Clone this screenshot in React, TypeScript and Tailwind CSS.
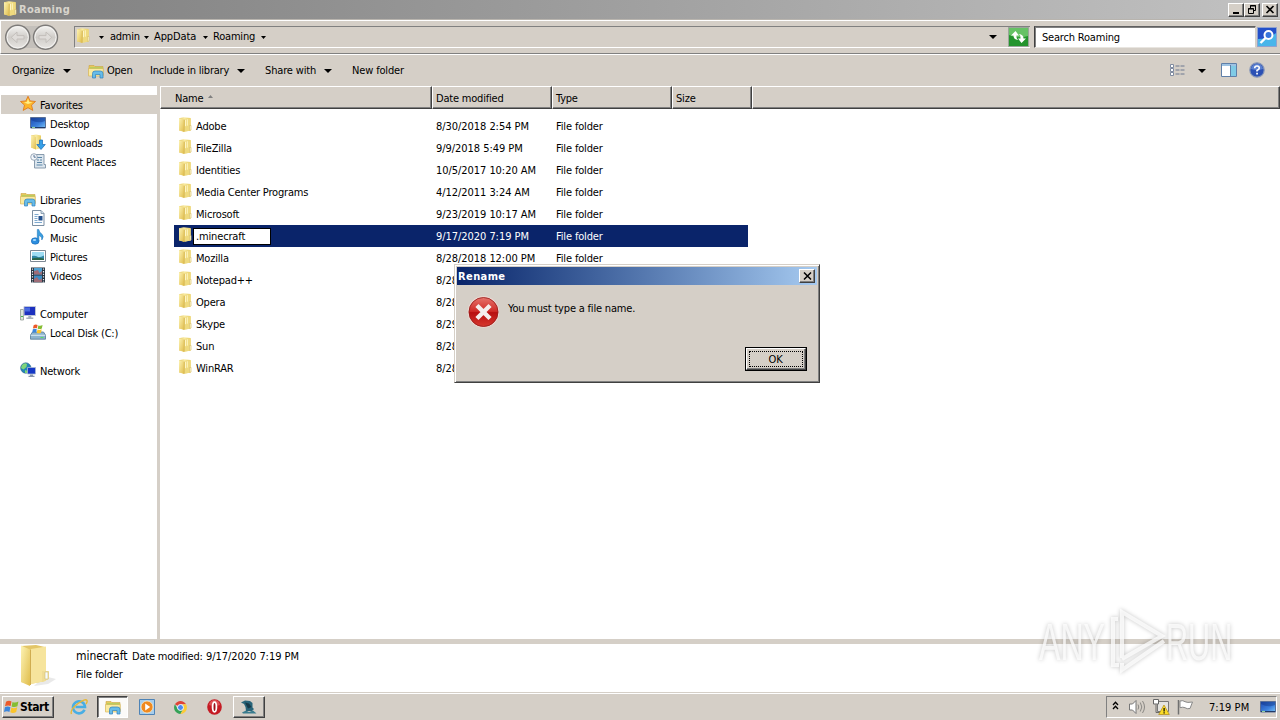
import type { ReactNode } from "react";

const files = [
  { name: "Adobe", date: "8/30/2018 2:54 PM" },
  { name: "FileZilla", date: "9/9/2018 5:49 PM" },
  { name: "Identities", date: "10/5/2017 10:20 AM" },
  { name: "Media Center Programs", date: "4/12/2011 3:24 AM" },
  { name: "Microsoft", date: "9/23/2019 10:17 AM" },
  { name: ".minecraft", date: "9/17/2020 7:19 PM", selected: true },
  { name: "Mozilla", date: "8/28/2018 12:00 PM" },
  { name: "Notepad++", date: "8/28/2018 2:54 PM" },
  { name: "Opera", date: "8/28/2018 2:54 PM" },
  { name: "Skype", date: "8/29/2018 2:54 PM" },
  { name: "Sun", date: "8/28/2018 2:54 PM" },
  { name: "WinRAR", date: "8/28/2018 2:54 PM" },
];

const raised =
  "border border-t-white border-l-white border-r-[#404040] border-b-[#404040] shadow-[inset_-1px_-1px_0_#808080]";

function Gradients() {
  return (
    <svg className="absolute h-0 w-0">
      <defs>
        <linearGradient id="folderFront" x1="0" y1="0" x2="1" y2="1">
          <stop offset="0" stopColor="#fdf3b4" />
          <stop offset="1" stopColor="#e0bd4c" />
        </linearGradient>
        <linearGradient id="folderBack" x1="0" y1="0" x2="1" y2="0">
          <stop offset="0" stopColor="#e6ca68" />
          <stop offset="0.5" stopColor="#f9eba2" />
          <stop offset="1" stopColor="#e8cc60" />
        </linearGradient>
        <linearGradient id="screen" x1="0" y1="0" x2="1" y2="1">
          <stop offset="0" stopColor="#1d48b0" />
          <stop offset="0.6" stopColor="#3c80dc" />
          <stop offset="1" stopColor="#7cc4f4" />
        </linearGradient>
        <linearGradient id="silver" x1="0" y1="0" x2="0" y2="1">
          <stop offset="0" stopColor="#f6f5f3" />
          <stop offset="0.5" stopColor="#cfccc8" />
          <stop offset="1" stopColor="#e9e7e4" />
        </linearGradient>
        <linearGradient id="errorRed" x1="0" y1="0" x2="0" y2="1">
          <stop offset="0" stopColor="#e87870" />
          <stop offset="0.48" stopColor="#cf2a26" />
          <stop offset="0.52" stopColor="#b80f10" />
          <stop offset="1" stopColor="#d83a30" />
        </linearGradient>
      </defs>
    </svg>
  );
}

function Icon({ children }: { children: ReactNode }) {
  return (
    <svg width="16" height="16" viewBox="0 0 16 16" className="shrink-0">
      {children}
    </svg>
  );
}

function FolderIcon() {
  return (
    <Icon>
      <path d="M2 1.2 6.5 0.3 13.5 1V13.5L8 14.6 2 13.5Z" fill="url(#folderBack)" />
      <path d="M7.5 2 13.8 1.3V13.5L7.5 14.8Z" fill="#efda7e" />
      <path d="M2 1.2 7 2.5V15L2 13.3Z" fill="url(#folderFront)" />
      <path d="M7.3 2.8V14.8" stroke="#cfaa40" strokeWidth="0.7" />
      <path d="M8.5 2.7V9.2M10.3 2.2V8.7" stroke="#fff8cc" strokeWidth="0.9" />
      <path d="M12.5 8.5h1.6v4.5l-1.6.4Z" fill="#f9f2c3" stroke="#d3b75c" strokeWidth="0.5" />
    </Icon>
  );
}

function LibraryIcon() {
  return (
    <Icon>
      <path d="M1 2.5h5l1 1h8V12H1Z" fill="#e8c95c" stroke="#c9a445" strokeWidth="0.6" />
      <path d="M2 4.5h12.5V6H2Z" fill="#8ed05c" />
      <path d="M.5 5.5h14.7V13H.5Z" fill="#faeaa0" stroke="#d5b250" strokeWidth="0.6" />
      <path d="M4.5 15V10.5Q4.5 8 7 8h5.5Q15 8 15 10.5V15h-3v-3.5H7.5V15Z" fill="#67bce8" stroke="#2e7fbd" strokeWidth="0.7" />
    </Icon>
  );
}

function StarIcon() {
  return (
    <Icon>
      <path d="M8 .3 10.1 4.9 15.5 5.5 11.5 9.1 12.8 14.4 8 11.7 3.2 14.4 4.5 9.1.5 5.5 5.9 4.9Z" fill="#fcb62c" stroke="#e07b20" strokeWidth="0.9" />
      <path d="M8 2.5 9.2 5.9 12.5 6.5 8 8 4 6.5 6.9 5.9Z" fill="#fff08a" />
    </Icon>
  );
}

function DesktopIcon() {
  return (
    <Icon>
      <path d="M.5 2.5h15v10.5H.5Z" fill="url(#screen)" stroke="#5a6f96" />
      <path d="M1 3h14v3Q8 9 1 5Z" fill="#0c2f7e" opacity=".4" />
      <path d="M1 12.5h14" stroke="#223a66" />
      <path d="M2 12.4h3" stroke="#9fe2a4" />
    </Icon>
  );
}

function DownloadsIcon() {
  return (
    <Icon>
      <path d="M1 1.5 6 .5 11 1.5V14L6 15.5 1 13.5Z" fill="url(#folderBack)" />
      <path d="M1 1.5 6 3V15.5L1 13.5Z" fill="url(#folderFront)" />
      <path d="M9.5 6h3v4.5h2.8L11 15.5 6.8 10.5h2.7Z" fill="#36a0e8" stroke="#1669b5" strokeWidth="0.7" />
    </Icon>
  );
}

function RecentIcon() {
  return (
    <Icon>
      <path d="M5 1.5h9v10h1.5V15H4.5V5Z" fill="#dce6ee" stroke="#7e92a6" strokeWidth="0.9" />
      <path d="M7 4.5h5M7 7h2m1 0h2M7 9.5h5M6.5 12h6" stroke="#5b86a8" />
      <circle cx="4" cy="4" r="3.3" fill="#f3f7fb" stroke="#8797aa" strokeWidth="0.8" />
      <path d="M4 2v2.2h1.8" stroke="#34547c" strokeWidth="0.8" fill="none" />
    </Icon>
  );
}

function DocumentIcon() {
  return (
    <Icon>
      <path d="M2.5.5h8.5l3 3v12H2.5Z" fill="#fbfdff" stroke="#6c8298" strokeWidth="0.9" />
      <path d="M11 .5v3h3" fill="#cfdeea" stroke="#6c8298" strokeWidth="0.7" />
      <path d="M4.5 4.5h4M4.5 6.5h3M4.5 8.5h3M4.5 10.5h3M4.5 12.5h7.5" stroke="#6f9fc9" strokeWidth="0.9" />
      <path d="M8.5 6h4v4.5h-4Z" fill="#24518e" />
    </Icon>
  );
}

function MusicIcon() {
  return (
    <Icon>
      <ellipse cx="5.2" cy="12" rx="3.9" ry="3.2" fill="#2c8fe0" stroke="#1664b2" strokeWidth="0.6" />
      <path d="M7.3 12V.5h1.5Q9.3 3.8 12 5.2 14.5 7.5 11.8 11 12.3 7.8 8.9 6.2V12Z" fill="#3c9fdf" stroke="#1b70b8" strokeWidth="0.5" />
      <ellipse cx="4.5" cy="11" rx="1.7" ry="1" fill="#a8dbff" />
    </Icon>
  );
}

function PicturesIcon() {
  return (
    <Icon>
      <path d="M.5 2.5h15v11H.5Z" fill="#fff" stroke="#7d8894" />
      <path d="M2 4h12v8H2Z" fill="#9edcf3" />
      <path d="M2 8Q6 7 8.5 9.3 11 9 14 7.5V12H2Z" fill="#2f86a5" />
      <path d="M2 10.5Q8 9 14 10.8V12H2Z" fill="#2b6649" />
    </Icon>
  );
}

function VideosIcon() {
  return (
    <Icon>
      <path d="M1 .5h14v15H1Z" fill="#26323f" />
      <path d="M4 1h8v6.5H4Z" fill="#4ea1d3" />
      <path d="M4 8.5h8V15H4Z" fill="#3d8ec5" />
      <path d="M4 4 8 3l1.5 3L12 4v3.5H4ZM4 12l3-2 2 3 3-1.5V15H4Z" fill="#9e6d78" />
      <path d="M2.5 1.5v14M13.5 1.5v14" stroke="#e6edf3" strokeWidth="1.2" strokeDasharray="1.3 1.3" />
    </Icon>
  );
}

function ComputerIcon() {
  return (
    <Icon>
      <path d="M.5 4.5h3V15h-3Z" fill="#dce6dc" stroke="#838d87" strokeWidth="0.7" />
      <path d="M1 11.5h2" stroke="#47b84b" />
      <path d="M4 1.5h11.5v9H4Z" fill="#1c30bf" stroke="#bec5d6" />
      <path d="M5 2.5h5v4H5Z" fill="#5c83f0" opacity=".7" />
      <path d="M8.3 11h3v1.5h2V14h-7v-1.5h2Z" fill="#a7b0bd" />
    </Icon>
  );
}

function WindowsFlag() {
  return (
    <g>
      <path d="M2 2.8Q4.7.8 7.5 2.4L6.6 7Q4 5.8 1 7.3Z" fill="#ec5a2a" />
      <path d="M8.5 2.9Q11.3 4.2 14.4 2.4L13.4 7.2Q10.6 8.7 7.6 7.4Z" fill="#85bd34" />
      <path d="M.9 8.3Q3.5 6.8 6.4 8.2L5.4 12.9Q3 11.6 0 13Z" fill="#3b86dc" />
      <path d="M7.4 8.6Q10 9.9 13.2 8.3L12.2 13Q9 14.7 6.3 13.2Z" fill="#fac42c" />
    </g>
  );
}

function DiskIcon() {
  return (
    <Icon>
      <path d="M2.5 8h11L15.5 11v4.2H.5V11Z" fill="#8eb4cd" stroke="#527a95" strokeWidth="0.8" />
      <path d="M.7 11.3h14.6" stroke="#d9ecf5" />
      <path d="M10.5 13.5h3" stroke="#58df63" />
      <g transform="translate(2.2 -.7) scale(.72)">
        <WindowsFlag />
      </g>
    </Icon>
  );
}

function NetworkIcon() {
  return (
    <Icon>
      <circle cx="5.8" cy="6" r="5.2" fill="#2385b5" stroke="#33608b" strokeWidth="0.6" />
      <path d="M2 3Q5 0 7 2L6.5 5 3.5 7.5 1 6ZM5 8l3 1-1 2H5Z" fill="#7fd578" />
      <path d="M7.5 5.5h8v6.5h-8Z" fill="#1537c6" stroke="#a9b8d2" strokeWidth="0.8" />
      <path d="M10 12.5h3v1.2h1.5V15h-6v-1.3H10Z" fill="#8694ac" />
    </Icon>
  );
}

const tree = [
  { label: "Favorites", icon: <StarIcon />, root: true, active: true },
  { label: "Desktop", icon: <DesktopIcon /> },
  { label: "Downloads", icon: <DownloadsIcon /> },
  { label: "Recent Places", icon: <RecentIcon /> },
  null,
  { label: "Libraries", icon: <LibraryIcon />, root: true },
  { label: "Documents", icon: <DocumentIcon /> },
  { label: "Music", icon: <MusicIcon /> },
  { label: "Pictures", icon: <PicturesIcon /> },
  { label: "Videos", icon: <VideosIcon /> },
  null,
  { label: "Computer", icon: <ComputerIcon />, root: true },
  { label: "Local Disk (C:)", icon: <DiskIcon /> },
  null,
  { label: "Network", icon: <NetworkIcon />, root: true },
];

function Caret({ small }: { small?: boolean }) {
  return small ? (
    <svg width="5" height="3" viewBox="0 0 5 3" className="shrink-0">
      <path d="M0 0h5L2.5 3Z" />
    </svg>
  ) : (
    <svg width="8" height="4" viewBox="0 0 8 4" className="shrink-0">
      <path d="M0 0h8L4 4Z" />
    </svg>
  );
}

function TitleBar() {
  const button = `flex h-[14px] items-center justify-center bg-[#d5cfc7] ${raised}`;
  return (
    <div className="flex h-[19px] items-center bg-linear-to-r from-[#808080] to-[#c2c2c2] pl-[2px] pr-[2px]">
      <div className="pb-px">
        <FolderIcon />
      </div>
      <span className="ml-px flex-1 font-bold tracking-[0.3px] text-[#d8d4cc]">Roaming</span>
      <div className="flex">
        <div className={`${button} w-[16px]`}>
          <svg width="12" height="11" viewBox="0 0 12 11">
            <path d="M3 8h6v2H3Z" />
          </svg>
        </div>
        <div className={`${button} w-[16px]`}>
          <svg width="12" height="11" viewBox="0 0 12 11" fill="none" stroke="#000">
            <path d="M4.5 4V1.5h5v5H8M4 2h6" />
            <path d="M2.5 4.5h5v5h-5ZM2 5h6" />
          </svg>
        </div>
        <div className={`${button} ml-[2px] w-[16px]`}>
          <svg width="12" height="11" viewBox="0 0 12 11" stroke="#000" strokeWidth="1.6">
            <path d="m2.5 2 7 7m0-7-7 7" />
          </svg>
        </div>
      </div>
    </div>
  );
}

function NavButtons() {
  return (
    <svg width="56" height="28" viewBox="0 0 56 28" className="shrink-0">
      <path d="M14 3h28v22H14Z" fill="#c4c0bb" />
      {[14.7, 42.5].map((x) => (
        <g key={x}>
          <circle cx={x} cy="14.3" r="12" fill="url(#silver)" stroke="#7d7b79" strokeWidth="1.4" />
          <circle cx={x} cy="14.3" r="10.6" fill="none" stroke="#f5f4f2" strokeWidth="1" />
        </g>
      ))}
      <path d="M21 12.6h-7V9L8.3 14.3 14 19.6V16h7Z" fill="#dfdcd9" stroke="#c3bfbb" />
      <path d="M36 12.6h7V9l5.7 5.3L43 19.6V16h-7Z" fill="#dfdcd9" stroke="#c3bfbb" />
    </svg>
  );
}

function AddressBar() {
  return (
    <div className="flex h-[34px] items-center border-t border-b border-l border-t-white border-b-[#808080] border-l-white pl-[2px] shadow-[inset_0_-1px_0_#d5cfc7]">
      <NavButtons />
      <div className="ml-[15px] flex h-[22px] w-[956px] items-center border-t border-l border-b border-t-[#808080] border-l-[#808080] border-b-white">
        <div className="pb-[2px]">
          <FolderIcon />
        </div>
        <div className="ml-[8px] flex items-center">
          <Caret small />
          <span className="ml-[6px] w-[34px] tracking-[-0.25px]">admin</span>
          <Caret small />
          <span className="ml-[5px] w-[49px] tracking-[-0.1px]">AppData</span>
          <Caret small />
          <span className="ml-[5px] w-[48px] tracking-[-0.2px]">Roaming</span>
          <Caret small />
        </div>
        <div className="ml-auto mr-[11px]">
          <Caret />
        </div>
        <svg width="21" height="20" viewBox="0 0 21 20" className="mr-px">
          <path d="M.5.5h20v19H.5Z" fill="#24942d" stroke="#9aa59a" />
          <path d="M1 1h19v8Q10 12 1 8Z" fill="#66c265" />
          <path d="M7.5 4 3 8.5h2.5q0 4 4.5 4.5-2-1.8-1.5-4.5H11Z" fill="#fff" />
          <path d="m13.5 16 4.5-4.5h-2.5q0-4-4.5-4.5 2 1.8 1.5 4.5H10Z" fill="#fff" />
        </svg>
      </div>
      <div className="ml-[4px] flex h-[22px] w-[222px] items-center border border-t-[#606060] border-l-[#404040] border-r-[#d5cfc7] border-b-[#e8e5e0] bg-white pl-[7px] shadow-[inset_1px_1px_0_#808080]">
        <span className="pt-[2px] tracking-[-0.19px]">Search Roaming</span>
      </div>
      <svg width="20" height="20" viewBox="0 0 20 20" className="ml-px">
        <path d="M.5.5h19v19H.5Z" fill="#2350c9" stroke="#8fa2cf" />
        <path d="M1 12Q12 12 19 6v13H1Z" fill="#48b5ea" />
        <circle cx="11.5" cy="8" r="4" fill="#3675dc" stroke="#fff" strokeWidth="2" />
        <path d="m8.5 11-5 5" stroke="#fff" strokeWidth="2.4" />
      </svg>
    </div>
  );
}

function Toolbar() {
  return (
    <div className="flex h-[32px] items-center border-t border-white pl-[12px]">
      <span className="w-[51px] pt-px">Organize</span>
      <Caret />
      <div className="ml-[17px]">
        <LibraryIcon />
      </div>
      <span className="ml-[3px] w-[43px] pt-px">Open</span>
      <span className="w-[87px] pt-px tracking-[-0.23px]">Include in library</span>
      <Caret />
      <span className="ml-[20px] w-[59px] pt-px tracking-[-0.15px]">Share with</span>
      <Caret />
      <span className="ml-[20px] pt-px tracking-[-0.15px]">New folder</span>
      <svg width="15" height="12" viewBox="0 0 15 12" className="mb-px ml-auto">
        <path d="M.5.5h3v3h-3Zm0 4h3v3h-3Zm0 4h3v3h-3Z" fill="#fff" stroke="#7f8ba0" />
        <path d="M5.5 2h4m1 0h4m-9 4h4m1 0h4m-9 4h4m1 0h4" stroke="#6c7890" />
      </svg>
      <div className="ml-[13px]">
        <Caret />
      </div>
      <svg width="16" height="14" viewBox="0 0 16 14" className="mb-px ml-[15px]">
        <path d="M.5.5h15v13H.5Z" fill="#fff" stroke="#5f7fa8" />
        <path d="M1 1h14v2H1Z" fill="#9ec3e3" />
        <path d="M10 3h5v10h-5Z" fill="#7fcbe6" />
        <path d="M9.5 2v11" stroke="#5f7fa8" />
      </svg>
      <svg width="16" height="16" viewBox="0 0 16 16" className="mr-[15px] mb-px ml-[12px]">
        <circle cx="8" cy="8" r="7.2" fill="#2b50b4" stroke="#8797b9" strokeWidth="1.2" />
        <path d="M2 7Q3 2 8 2t6 5Q8 9 2 7Z" fill="#7094dd" opacity=".7" />
        <path d="M5.7 6.2Q5.7 4 8 4t2.3 2.1Q10.3 7.5 8 8.4v1.1" fill="none" stroke="#fff" strokeWidth="1.6" />
        <path d="M7.2 10.8h1.7v1.6H7.2Z" fill="#fff" />
      </svg>
    </div>
  );
}

function Sidebar() {
  return (
    <aside className="w-[157px] bg-white pt-[9px]">
      {tree.map((item, i) =>
        item ? (
          <div
            key={i}
            className={`ml-px flex h-[19px] items-center ${item.root ? "pl-[19px]" : "pl-[29px]"} ${item.active ? "-mr-[3px] bg-[#d5cfc7]" : ""}`}
          >
            <div className="pb-px">{item.icon}</div>
            <span className="ml-[4px] pt-[3px] tracking-[-0.2px] whitespace-nowrap">{item.label}</span>
          </div>
        ) : (
          <div key={i} className="h-[19px]" />
        ),
      )}
    </aside>
  );
}

function ColumnHeaders() {
  const cell =
    "flex items-center border-t border-l border-r border-b border-t-white border-l-white border-r-[#404040] border-b-[#404040] pt-[2px] shadow-[inset_-1px_-1px_0_#808080]";
  return (
    <div className="flex h-[23px] bg-[#d5cfc7] tracking-[-0.2px]">
      <div className={`${cell} w-[272px] pl-[14px]`}>
        Name
        <svg width="5" height="3" viewBox="0 0 5 3" className="mb-[4px] ml-[5px]">
          <path d="M0 3h5L2.5 0Z" fill="#808080" />
        </svg>
      </div>
      <div className={`${cell} w-[120px] pl-[3px]`}>Date modified</div>
      <div className={`${cell} w-[120px] pl-[3px]`}>Type</div>
      <div className={`${cell} w-[80px] pl-[3px]`}>Size</div>
      <div className={`${cell} flex-1`} />
    </div>
  );
}

function FileList() {
  return (
    <main className="flex-1 bg-white">
      <ColumnHeaders />
      <div className="ml-[14px] mt-[6px] w-[574px]">
        {files.map((file) => (
          <div
            key={file.name}
            className={`flex h-[22px] items-center pl-[3px] ${file.selected ? "bg-[#0a246a] text-white" : ""}`}
          >
            <div className="pb-[2px]">
              <FolderIcon />
            </div>
            {file.selected ? (
              <div className="mr-[165px] flex h-[17px] w-[78px] items-center border border-black bg-white pt-px pl-[2px] tracking-[-0.15px] text-black">
                {file.name}
              </div>
            ) : (
              <span className="w-[243px] pt-[2px] pl-[3px] tracking-[-0.19px]">{file.name}</span>
            )}
            <span className="w-[120px] pt-[2px] tracking-[-0.05px] whitespace-nowrap">{file.date}</span>
            <span className="pt-[2px] tracking-[-0.15px]">File folder</span>
          </div>
        ))}
      </div>
    </main>
  );
}

function DetailsPane() {
  return (
    <div className="flex h-[48px] bg-white pl-[18px]">
      <svg width="44" height="46" viewBox="0 0 44 46">
        <path d="M26 32 38 35 30 40 16 42Z" fill="#d4d4d4" opacity=".5" />
        <path d="M3 2 18 1 27 3V37L12 40 3 38Z" fill="#e3c668" />
        <path d="M13 5 28 2.5V37L13 40Z" fill="#f6e49c" />
        <path d="M3 1.5 12 5.500V42L3 38Z" fill="url(#folderFront)" />
        <path d="M12.500 6v35" stroke="#d0ad50" />
        <path d="M24 27h7v8l-7 3Z" fill="#efdc94" />
        <path d="M27 28h3v7h-3Z" fill="#f7fbfb" stroke="#cdbd77" strokeWidth=".6" />
      </svg>
      <div className="ml-[14px] pt-[3px] leading-[18px]">
        <div className="flex">
          <span className="w-[56px] text-[12px] tracking-[-0.05px]">minecraft</span>
          <span className="w-[74px] pt-px tracking-[-0.2px]">Date modified:</span>
          <span className="pt-px tracking-[-0.05px]">9/17/2020 7:19 PM</span>
        </div>
        <div className="tracking-[-0.15px]">File folder</div>
      </div>
    </div>
  );
}

function Taskbar() {
  return (
    <div className="mt-px flex h-[27px] items-center border-t border-white bg-[#d5cfc7] pl-[2px]">
      <div className={`flex h-[22px] w-[52px] items-center bg-[#d5cfc7] pl-px ${raised}`}>
        <Icon>
          <WindowsFlag />
        </Icon>
        <span className="text-[12px] font-bold tracking-[-0.4px]">Start</span>
      </div>
      <svg width="18" height="18" viewBox="0 0 18 18" className="ml-[16px]">
        <path d="M14.5 11.8A6 6 0 1 1 15 9H5.5" fill="none" stroke="#48aee4" strokeWidth="2.6" />
        <path d="M1.5 16Q-.5 12 8 5.5 15.5.2 17 2.5q.6 1-1 3.5" fill="none" stroke="#e7b836" strokeWidth="1.4" />
      </svg>
      <div className="ml-[9px] flex h-[22px] w-[31px] items-center justify-center border border-t-[#404040] border-l-[#404040] border-r-white border-b-white bg-[#fbfaf8] shadow-[inset_1px_1px_0_#808080]">
        <LibraryIcon />
      </div>
      <svg width="16" height="16" viewBox="0 0 16 16" className="ml-[11px]">
        <path d="M.5.5h15v15H.5Z" fill="#a6cdec" stroke="#4e83b6" />
        <circle cx="8" cy="8" r="6" fill="#ef891f" stroke="#fff0cf" strokeWidth=".7" />
        <path d="m6.2 4.6 5 3.4-5 3.4Z" fill="#fff" />
      </svg>
      <svg width="13" height="13" viewBox="0 0 14 14" className="ml-[19px]">
        <path d="M7 7 1 3.5A7 7 0 0 1 13 3.5H7Z" fill="#df4437" />
        <path d="M1 3.5A7 7 0 0 0 7 14L10 8.7 4 8.7Z" fill="#35a257" />
        <path d="M13 3.5A7 7 0 0 1 7 14L10 8.5 9.5 3.5Z" fill="#fbcb38" />
        <circle cx="7" cy="7" r="3.2" fill="#4a8af0" stroke="#fff" />
      </svg>
      <svg width="15" height="16" viewBox="0 0 15 16" className="ml-[20px]">
        <ellipse cx="7.5" cy="8" rx="7.3" ry="7.7" fill="#c51b24" />
        <path d="M2 6Q3 1 7.5 1T13 6Q8 8 2 6Z" fill="#ed7778" opacity=".6" />
        <ellipse cx="7.5" cy="8" rx="1.9" ry="4.8" fill="#9d111b" stroke="#fff" strokeWidth="1.8" />
      </svg>
      <div className={`ml-[11px] flex h-[22px] w-[32px] items-center justify-center ${raised}`}>
        <svg width="16" height="16" viewBox="0 0 16 16">
          <path d="M0 3.5 4 1.5 9 2 11.5 4V8.5L13 10 11 12H5L4.5 8 3 5Z" fill="#286479" />
          <path d="M4 3.5 8 4.5 10.5 8 7 9.5Z" fill="#173948" />
          <path d="M1 13.5 5 11.5 8 13 12 11.5 15.5 14.5H2Z" fill="#3a7c8e" />
        </svg>
      </div>
      <div className="ml-auto mr-[3px] flex h-[22px] w-[171px] items-center border border-t-[#808080] border-l-[#808080] border-r-white border-b-white pl-[5px]">
        <svg width="7" height="9" viewBox="0 0 7 9" fill="none" stroke="#000" strokeWidth="1.3" className="mb-[4px]">
          <path d="M1 4 3.5 1.3 6 4M1 8l2.5-2.7L6 8" />
        </svg>
        <svg width="17" height="16" viewBox="0 0 17 16" className="ml-[10px]" fill="none">
          <path d="M.5 5h3L7 1.5v13L3.5 11h-3Z" fill="#fff" stroke="#777" />
          <path d="M9 5.5q1.5 2.5 0 5M11.3 3.5q3 4.5 0 9M13.5 2q4 6 0 12" stroke="#898783" />
        </svg>
        <svg width="17" height="16" viewBox="0 0 17 16" className="ml-[7px]">
          <path d="M4.5 2.5h11v10h-11Z" fill="#e5e4e0" stroke="#777" />
          <path d="M3 5.5v8h4" fill="none" stroke="#6c6a68" />
          <path d="M.5.5h5v4.5h-5Z" fill="#fff" stroke="#666" />
          <path d="m11 6 5.3 9.5H5.7Z" fill="#fbdc28" stroke="#af8917" strokeWidth=".7" />
          <path d="M10.5 9h1.2v3.5h-1.2Zm0 4.2h1.2v1.2h-1.2Z" />
        </svg>
        <svg width="17" height="16" viewBox="0 0 17 16" className="ml-[7px]">
          <path d="M1.5 1v14.5" stroke="#707070" strokeWidth="1.5" />
          <path d="M3 2q3-1 5 .7 2 1.3 7.5.3L13 9.5q-3 .8-5-.8-2-1-5 0Z" fill="#fff" stroke="#888" />
        </svg>
        <span className="ml-[15px] w-[41px] pt-px tracking-[0.05px] whitespace-nowrap">7:19 PM</span>
        <div className="ml-[10px]">
          <DesktopIcon />
        </div>
      </div>
    </div>
  );
}

function RenameDialog() {
  return (
    <div className="absolute top-[264px] left-[454px] h-[119px] w-[366px] border border-t-[#d5cfc7] border-l-[#d5cfc7] border-r-[#404040] border-b-[#404040] bg-[#d5cfc7] p-[2px] shadow-[inset_1px_1px_0_#fff,inset_-1px_-1px_0_#808080]">
      <div className="flex h-[18px] items-center bg-linear-to-r from-[#0a246a] to-[#a6caf0] pr-[2px] pl-px">
        <span className="flex-1 pt-px font-bold tracking-[0.4px] text-white">Rename</span>
        <div className={`flex h-[14px] w-[16px] items-center justify-center bg-[#d5cfc7] ${raised}`}>
          <svg width="9" height="8" viewBox="0 0 9 8" stroke="#000" strokeWidth="1.5">
            <path d="m1 .5 7 7m0-7-7 7" />
          </svg>
        </div>
      </div>
      <div className="flex pt-[11px] pl-[10px]">
        <svg width="32" height="32" viewBox="0 0 32 32">
          <circle cx="16.5" cy="16" r="15.3" fill="url(#errorRed)" stroke="#e9d8d2" strokeWidth="1.2" />
          <circle cx="16.5" cy="16" r="14.5" fill="none" stroke="#96201e" strokeWidth=".8" />
          <path d="m11.5 11 10 10m0-10-10 10" stroke="#f4efee" strokeWidth="4.4" strokeLinecap="square" />
        </svg>
        <span className="ml-[9px] pt-[6px] tracking-[-0.19px]">You must type a file name.</span>
      </div>
      <div className="mt-[19px] mr-[10px] ml-auto h-[24px] w-[62px] border border-black">
        <div className={`h-full p-[2px] ${raised}`}>
          <div className="flex h-full items-center justify-center border border-dotted border-black pt-px pr-px">OK</div>
        </div>
      </div>
    </div>
  );
}

function Watermark() {
  return (
    <svg
      width="220"
      height="80"
      viewBox="0 0 220 80"
      className="absolute top-[600px] left-[1030px] drop-shadow-[0_0_2px_rgba(0,0,0,0.3)]"
    >
      <g fill="#fff" fillOpacity=".75" fontFamily="Liberation Sans, sans-serif" fontSize="51" letterSpacing="0">
        <text transform="translate(9 60) scale(.63 1)">ANY</text>
        <text transform="translate(136 60) scale(.6 1)">RUN</text>
      </g>
      <g fill="none" stroke="#fff" strokeWidth="4" strokeOpacity=".75">
        <path d="M88 19h-5v46h6" />
        <path d="M92 58V12l40 24-40 23" />
        <path d="M92 63v7l42-29" />
      </g>
    </svg>
  );
}

export default function App() {
  return (
    <div className="relative flex h-[720px] w-[1280px] flex-col overflow-hidden bg-[#d5cfc7] font-['DejaVu_Sans_Condensed','DejaVu_Sans',sans-serif] text-[11px] leading-[14px] tracking-[-0.25px] text-black [font-stretch:condensed]">
      <Gradients />
      <TitleBar />
      <div className="h-[1px] bg-[#b8b4ae]" />
      <AddressBar />
      <Toolbar />
      <div className="flex h-[553px] gap-[3px]">
        <Sidebar />
        <FileList />
      </div>
      <div className="h-[5px]" />
      <DetailsPane />
      <Taskbar />
      <Watermark />
      <RenameDialog />
    </div>
  );
}
